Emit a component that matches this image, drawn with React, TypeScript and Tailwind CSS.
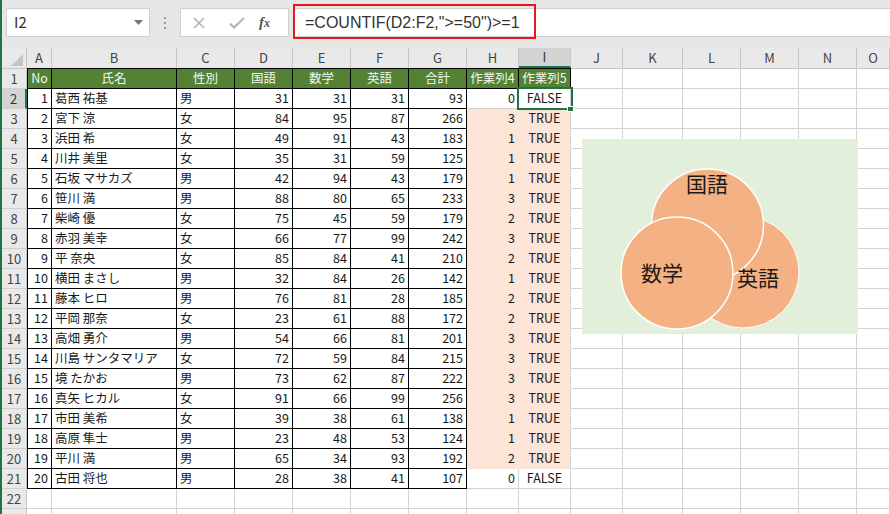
import React from "react";

type Row = [number, string, string, number, number, number, number, number, boolean];

const rows: Row[] = [
  [1, "葛西 祐基", "男", 31, 31, 31, 93, 0, false],
  [2, "宮下 涼", "女", 84, 95, 87, 266, 3, true],
  [3, "浜田 希", "女", 49, 91, 43, 183, 1, true],
  [4, "川井 美里", "女", 35, 31, 59, 125, 1, true],
  [5, "石坂 マサカズ", "男", 42, 94, 43, 179, 1, true],
  [6, "笹川 満", "男", 88, 80, 65, 233, 3, true],
  [7, "柴崎 優", "女", 75, 45, 59, 179, 2, true],
  [8, "赤羽 美幸", "女", 66, 77, 99, 242, 3, true],
  [9, "平 奈央", "女", 85, 84, 41, 210, 2, true],
  [10, "横田 まさし", "男", 32, 84, 26, 142, 1, true],
  [11, "藤本 ヒロ", "男", 76, 81, 28, 185, 2, true],
  [12, "平岡 那奈", "女", 23, 61, 88, 172, 2, true],
  [13, "高畑 勇介", "男", 54, 66, 81, 201, 3, true],
  [14, "川島 サンタマリア", "女", 72, 59, 84, 215, 3, true],
  [15, "境 たかお", "男", 73, 62, 87, 222, 3, true],
  [16, "真矢 ヒカル", "女", 91, 66, 99, 256, 3, true],
  [17, "市田 美希", "女", 39, 38, 61, 138, 1, true],
  [18, "高原 隼士", "男", 23, 48, 53, 124, 1, true],
  [19, "平川 満", "男", 65, 34, 93, 192, 2, true],
  [20, "古田 将也", "男", 28, 38, 41, 107, 0, false],
];

const letters = ["A", "B", "C", "D", "E", "F", "G", "H", "I", "J", "K", "L", "M", "N", "O"];
const headers = ["No", "氏名", "性別", "国語", "数学", "英語", "合計", "作業列4", "作業列5"];

function cellText(r: number, c: number): { text: string; align: string } {
  if (r === 1) {
    return c < 9 ? { text: headers[c], align: "justify-center" } : { text: "", align: "" };
  }
  const d = rows[r - 2];
  if (!d || c > 8) return { text: "", align: "" };
  if (c === 1 || c === 2) return { text: String(d[c]), align: "justify-start pl-[3px]" };
  if (c === 8) return { text: d[8] ? "TRUE" : "FALSE", align: "justify-center" };
  return { text: String(d[c]), align: "justify-end pr-[3px]" };
}

function Cell({ r, c }: { r: number; c: number }) {
  const inTable = c <= 6 && r >= 1 && r <= 21;
  const header = r === 1 && c <= 8;
  const peach = (c === 7 || c === 8) && r >= 3 && r <= 20;
  let cls = "flex items-center whitespace-nowrap overflow-hidden ";
  cls += r === 1 ? "h-[21px] border-t " : "h-[20px] ";
  if (header) {
    cls += "bg-[#548235] text-[#f3f7f0] border-r border-b border-black ";
    if (c === 0) cls += "border-l ";
  } else if (inTable) {
    cls += "bg-white text-[#1a1a1a] border-r border-b border-black ";
    if (c === 0) cls += "border-l ";
  } else if (peach) {
    cls += "bg-[#fce4d6] text-[#1a1a1a] border-b border-[#fce4d6] ";
    cls += c === 7 ? "border-r border-r-[#fce4d6] " : "border-r border-r-[#d4d4d4] ";
  } else {
    cls += "bg-white text-[#1a1a1a] border-r border-b border-[#d4d4d4] ";
    if (r === 1) cls += "border-t-[#c6c6c6] ";
  }
  const { text, align } = cellText(r, c);
  return <div className={cls + align}>{text}</div>;
}

function Toolbar() {
  return (
    <div className="relative h-[48px] shrink-0 flex items-start pt-[8px] pl-[4px] bg-[#e6e6e6]">
      <div className="w-[144px] h-[29px] bg-white border border-[#d0d0d0] flex items-center justify-between pl-[7px] pr-[6px] text-[15px] text-[#333]">
        <span>I2</span>
        <svg width="9" height="5" viewBox="0 0 9 5">
          <path d="M0 0h9L4.5 5z" fill="#777" />
        </svg>
      </div>
      <div className="w-[30px] h-[29px] flex flex-col items-center justify-center gap-[3px]">
        <span className="w-[2px] h-[2px] bg-[#999]" />
        <span className="w-[2px] h-[2px] bg-[#999]" />
        <span className="w-[2px] h-[2px] bg-[#999]" />
      </div>
      <div className="w-[109px] h-[29px] bg-white border border-[#d0d0d0] flex items-center">
        <svg width="38" height="14" viewBox="0 0 38 14">
          <path d="M13 2l10 10M23 2L13 12" stroke="#b4b4b4" strokeWidth="1.6" />
        </svg>
        <svg width="38" height="14" viewBox="0 0 38 14">
          <path d="M11 7.5l4 4L25 2" stroke="#b4b4b4" strokeWidth="2" fill="none" />
        </svg>
        <span className="ml-[2px] font-['Liberation_Serif',serif] italic text-[15px] text-[#555] font-bold">
          f<span className="text-[12px]">x</span>
        </span>
      </div>
      <div className="ml-[4px] flex-1 h-[29px] bg-white border-y border-l border-[#d0d0d0] flex items-center pl-[11px] text-[16px] text-[#333] font-['Liberation_Sans',sans-serif]">
        =COUNTIF(D2:F2,"&gt;=50")&gt;=1
      </div>
      <div className="absolute left-[291px] top-[4px] w-[243px] h-[35px] border-2 border-[#e8161e]" />
    </div>
  );
}

function Venn() {
  return (
    <div className="absolute left-[580px] top-[91px] w-[276px] h-[195px] bg-[#e2efda]">
      <svg width="276" height="195" viewBox="0 0 276 195" className="font-['Noto_Sans_CJK_JP',sans-serif]">
        <circle cx="161" cy="133" r="56" fill="#f4b183" stroke="#ffffff" strokeWidth="1" />
        <circle cx="125.5" cy="86" r="56" fill="#f4b183" stroke="#ffffff" strokeWidth="1.5" />
        <circle cx="95" cy="134" r="56" fill="#f4b183" stroke="#ffffff" strokeWidth="1.5" />
        <text x="125" y="53" fontSize="21" textAnchor="middle" fill="#1a1a1a">国語</text>
        <text x="80" y="142" fontSize="21" textAnchor="middle" fill="#1a1a1a">数学</text>
        <text x="176" y="147" fontSize="21" textAnchor="middle" fill="#1a1a1a">英語</text>
      </svg>
    </div>
  );
}

export default function App() {
  const rowNums = Array.from({ length: 23 }, (_, i) => i + 1);
  return (
    <div className="flex w-[890px] h-[514px] overflow-hidden font-['Noto_Sans_CJK_JP',sans-serif] text-[12.5px]">
      <div className="w-[2px] shrink-0 bg-[#217346]" />
      <div className="flex-1 flex flex-col bg-[#e6e6e6] min-w-0">
        <Toolbar />
        <div className="relative shrink-0 grid grid-cols-[25px_25px_125px_58px_58px_58px_58px_58px_52px_52px_52px_60px_58px_58px_58px_33px] content-start">
          <div className="h-[20px] bg-[#e9e9e9] border-r border-[#c6c6c6] relative">
            <svg width="12" height="12" viewBox="0 0 12 12" className="absolute right-[3px] bottom-[2px]">
              <path d="M12 0v12H0z" fill="#c4c4c4" />
            </svg>
          </div>
          {letters.map((l, i) => (
            <div
              key={l}
              className={
                i === 8
                  ? "h-[20px] flex items-center justify-center bg-[#d3d3d3] border-r border-[#c6c6c6] border-b-2 border-b-[#217346] text-[13px] text-[#333]"
                  : "h-[20px] flex items-center justify-center bg-[#e9e9e9] border-r border-[#c6c6c6] text-[13px] text-[#444]"
              }
            >
              {l}
            </div>
          ))}
          {rowNums.map((r) => (
            <React.Fragment key={r}>
              <div
                className={
                  (r === 1 ? "h-[21px] border-t border-t-[#c6c6c6] " : "h-[20px] ") +
                  (r === 2
                    ? "flex items-center justify-center bg-[#d3d3d3] border-b border-[#d0d0d0] border-r-2 border-r-[#217346] text-[13px] text-[#333]"
                    : "flex items-center justify-center bg-[#e9e9e9] border-b border-[#d0d0d0] border-r border-r-[#c6c6c6] text-[13px] text-[#444]")
                }
              >
                {r}
              </div>
              {letters.map((_, c) => (
                <Cell key={c} r={r} c={c} />
              ))}
            </React.Fragment>
          ))}
          <div className="absolute left-[515px] top-[39px] w-[56px] h-[23px] border-2 border-[#217346] pointer-events-none" />
          <div className="absolute left-[565px] top-[58px] w-[7px] h-[6px] bg-[#217346] border border-white" />
          <Venn />
        </div>
      </div>
    </div>
  );
}
